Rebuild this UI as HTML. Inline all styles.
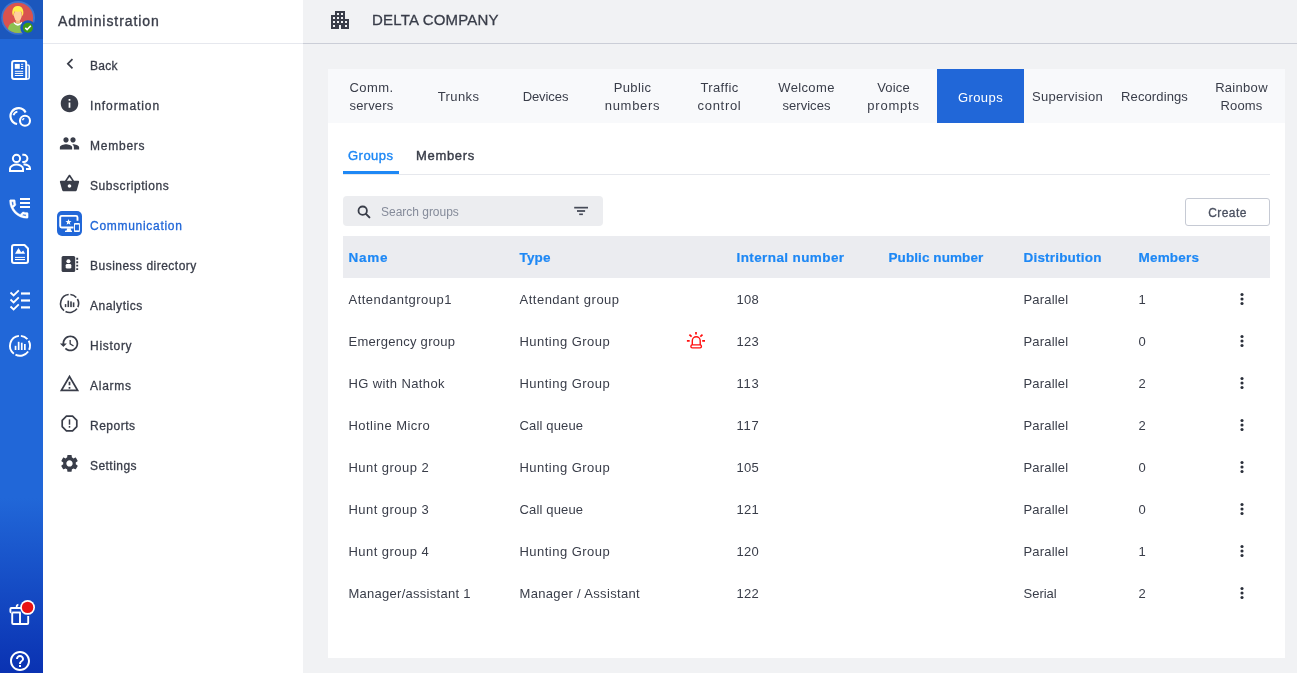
<!DOCTYPE html>
<html lang="en"><head><meta charset="utf-8"><title>Administration - Groups</title>
<style>
*{box-sizing:border-box}
html,body{margin:0;padding:0}
body{width:1297px;height:673px;overflow:hidden;position:relative;will-change:transform;background:#f1f2f4;font-family:"Liberation Sans",Arial,sans-serif;font-size:13px;color:#393d49}
ul{list-style:none;margin:0;padding:0}
.rail{position:absolute;left:0;top:0;width:43px;height:673px;background:linear-gradient(to bottom,#2167d8 0,#2167d8 74%,#0a32b2 100%)}
.rail .av{position:absolute;left:0;top:0;width:43px;height:39px;background:#1b57bd}
.railsvg{position:absolute;left:0;top:0}
.admin{position:absolute;left:43px;top:0;width:260px;height:673px;background:#fff}
.admin h1{margin:0;height:44px;border-bottom:1px solid #e6e8ee;font-size:14px;font-weight:400;line-height:43px;padding-left:15px;-webkit-text-stroke:.35px #393d49;color:#393d49}
.admin li{position:absolute;left:0;width:260px;height:40px;line-height:40px;font-size:12px;font-weight:400;-webkit-text-stroke:.3px currentColor}
.admin li .ml{position:absolute;left:47px;top:1px;white-space:nowrap}
.admin li.act{color:#2167d8}
.mi{position:absolute;overflow:visible}
.admin li .mi{margin-top:0}
.main{position:absolute;left:303px;top:0;width:994px;height:673px}
.main header{height:44px;border-bottom:1px solid #cbced7;position:relative}
.main header svg{position:absolute;left:25px;top:8px}
.main header h2{margin:0;position:absolute;left:69px;top:0;line-height:40px;font-size:15px;font-weight:400;-webkit-text-stroke:.3px #393d49;white-space:nowrap}
.card{position:absolute;left:25px;top:69px;width:957px;height:589px;background:#fff}
.tabs{display:flex;height:54px;background:#f8f9fb}
.tabs li{width:87px;height:54px;display:flex;align-items:center;justify-content:center;text-align:center;line-height:18px;padding-top:2px;white-space:nowrap}
.tabs li span span{display:inline-block}
.tabs li.on{background:#2167d8;color:#fff}
.tabs li.on>span{position:relative;top:1px}
.sub{position:absolute;left:15px;top:69px;width:927px;height:37px;border-bottom:1px solid #e6e8ed;font-weight:400;font-size:13px;-webkit-text-stroke:.4px currentColor}
.sub a{position:absolute;top:0;height:36px;line-height:36px;white-space:nowrap}
.sub a.on{left:0;width:56px;color:#1e88f5;border-bottom:3px solid #1e88f5;padding-left:5px}
.sub a.m{left:73px}
.search{position:absolute;left:15px;top:127px;width:260px;height:30px;border-radius:4px;background:#ecedf0;font-size:12px;color:#858b9a}
.search svg{position:absolute}
.search span.ph{position:absolute;left:38px;top:1px;line-height:31px;white-space:nowrap}
.btn{position:absolute;left:857px;top:129px;width:85px;height:28px;border:1px solid #c6cad4;border-radius:3px;background:#fff;font-size:12px;font-weight:400;-webkit-text-stroke:.3px #4a5060;color:#4a5060;text-align:center;line-height:27px;padding-top:1px}
table{position:absolute;left:15px;top:167px;width:927px;border-collapse:collapse;table-layout:fixed}
th{height:42px;background:#ebecf0;color:#1e88f5;font-weight:700;font-size:13.5px;-webkit-text-stroke:.2px #1e88f5;text-align:left;padding:1px 0 0 5.5px;white-space:nowrap}
td{height:42px;padding:1px 0 0 5.5px;white-space:nowrap;position:relative}
td.kb{padding:0;text-align:center}
.kebab{position:absolute;left:26px;top:14px}
.siren{position:absolute;left:172px;top:11.400px}
</style></head>
<body>
<nav class="rail"><div class="av"></div>
<svg class="railsvg" width="43" height="673" viewBox="0 0 43 673" fill="none" stroke="#fff" stroke-width="2" stroke-linejoin="round" stroke-linecap="butt">
<!-- avatar -->
<g stroke="none">
<circle cx="18.100" cy="17.800" r="16.900" fill="#3e74ce"/>
<circle cx="18" cy="17.800" r="15.100" fill="#d9534f"/>
<clipPath id="avc"><circle cx="18" cy="17.800" r="15.100"/></clipPath>
<g clip-path="url(#avc)">
<path d="M7.600 34 C7.600 26 9.500 23.200 13.500 22.800 L22.500 22.800 C26.500 23.200 28.400 26 28.400 34 Z" fill="#8cc152"/>
<path d="M13.700 21.700 Q17.850 26 22 21.700 L22 23.300 Q17.850 28 13.700 23.300 Z" fill="#fff"/>
<path d="M15.700 18.500 h4.300 v3.900 Q17.850 24.600 15.700 22.400 Z" fill="#f4b87a"/>
<ellipse cx="17.850" cy="15.300" rx="3.950" ry="5.600" fill="#ffcf9e"/>
<path d="M13.600 15.900 C12.600 15.500 12 13.500 12.300 11.200 C12.700 7.600 14.800 5.900 17.800 5.900 S22.900 7.600 23.300 11.200 C23.600 13.500 23 15.500 22.100 15.900 C22 13.700 21.700 12.400 20.900 11.300 C19 12 16 11.900 14.900 11.300 C14 12.400 13.700 13.700 13.600 15.900 Z" fill="#fff04e"/>
</g>
<circle cx="27.900" cy="27.800" r="7.600" fill="#1b57bd"/>
<circle cx="27.900" cy="27.800" r="5" fill="#3f9a12"/>
<path d="M25.300 27.900 l1.800 1.700 l3.700 -3.900" stroke="#fff" stroke-width="1.600" fill="none" stroke-linejoin="miter"/>
</g>
<!-- news -->
<path d="M12.100 63 a2 2 0 0 1 2 -2 h10.100 a2 2 0 0 1 2 2 v16 h-12.100 a2 2 0 0 1 -2 -2 z"/>
<path d="M27.200 64.900 h.5 a1.500 1.500 0 0 1 1.500 1.500 v11.100 a1.500 1.500 0 0 1 -1.500 1.500 h-2" stroke-width="1.500"/>
<g stroke="none" fill="#fff"><rect x="14.800" y="63.900" width="5" height="4.900"/><rect x="21" y="63.800" width="2.200" height="1"/><rect x="21" y="65.900" width="2.200" height="1"/><rect x="21" y="68" width="2.200" height="1"/><rect x="14.800" y="70.800" width="8.400" height="1"/><rect x="14.800" y="72.900" width="8.400" height="1"/><rect x="14.800" y="75" width="8.400" height="1"/></g>
<!-- bubbles -->
<g stroke-width="2.200">
<path d="M25.600 112.400 A8 8 0 1 0 17.100 124"/>
<path d="M13.500 115.200 A5 5 0 0 1 17.400 111.600" stroke-width="1.900"/>
<circle cx="25" cy="120.800" r="5" stroke-width="2.100"/>
<path d="M22.500 120.200 A2.800 2.800 0 0 1 24.300 118.400" stroke-width="1.500"/>
</g>
<!-- people outline -->
<g stroke-width="2">
<circle cx="16.500" cy="158.400" r="3.600"/>
<path d="M10 171 v-2.600 c0 -2.400 4 -3.900 6.500 -3.900 s6.500 1.500 6.500 3.900 v2.600 z" stroke-linejoin="miter"/>
<path d="M22.300 154.800 h1.500 a3.600 3.600 0 0 1 0 7.200 h-1.500" />
<path d="M23.500 164.200 c3 .3 6.500 1.700 6.500 4.100 v.700 h-4" stroke-linejoin="miter"/>
</g>
<!-- phone + list -->
<g transform="translate(6.500,196.600) scale(1.030)" stroke="#fff" stroke-width=".350" fill="#fff"><path d="M6.54 5c.06.89.21 1.76.45 2.590l-1.200 1.200c-.41-1.200-.67-2.470-.76-3.790h1.510m9.860 12.020c.85.24 1.720.39 2.600.45v1.490c-1.320-.09-2.590-.35-3.800-.75l1.200-1.190M7.500 3H4c-.55 0-1 .45-1 1 0 9.390 7.610 17 17 17 .55 0 1-.45 1-1v-3.490c0-.55-.45-1-1-1-1.240 0-2.450-.2-3.570-.57-.1-.04-.21-.05-.31-.05-.26 0-.51.1-.71.290l-2.200 2.200c-2.830-1.450-5.150-3.760-6.590-6.590l2.200-2.200c.28-.28.36-.67.25-1.020C8.700 6.450 8.500 5.250 8.500 4c0-.55-.45-1-1-1z"/></g>
<g stroke="none" fill="#fff"><rect x="20" y="198" width="10" height="2"/><rect x="20" y="202" width="10" height="2"/><rect x="20" y="206" width="10" height="2"/></g>
<!-- doc image -->
<path d="M12 247 a2 2 0 0 1 2 -2 h10.500 l3.500 3.500 v12.500 a2 2 0 0 1 -2 2 h-12 a2 2 0 0 1 -2 -2 z"/>
<g stroke="none" fill="#fff"><path d="M15 253.800 l3.500 -5.700 l2.700 4.200 l2 -1.700 l1.900 3.200 z"/><rect x="15" y="256.900" width="10" height="1"/><rect x="15" y="259" width="10" height="1.100"/></g>
<!-- checklist -->
<g stroke-width="1.800" stroke-linejoin="miter"><path d="M10.500 292.500 l3.100 3 l5.200 -5.200"/><path d="M10.500 299.500 l3.100 3 l5.200 -5.200"/><path d="M10.500 306.500 l3.100 3 l5.200 -5.200"/></g>
<g stroke="none" fill="#fff"><rect x="21" y="292.400" width="9" height="2.200"/><rect x="21" y="299.400" width="9" height="2.200"/><rect x="21" y="306.300" width="9" height="2.200"/></g>
<!-- analytics -->
<g stroke-width="1.900">
<path d="M20.87 335.84A10 10 0 0 1 27.43 339.11M28.66 340.80A10 10 0 0 1 29.14 349.87M28.19 351.54A10 10 0 0 1 15.46 354.71M13.84 353.68A10 10 0 0 1 18.95 335.85"/>
</g>
<g stroke="none" fill="#fff"><rect x="14.700" y="345.800" width="1.700" height="4.200"/><rect x="17.800" y="341.800" width="1.700" height="8.200"/><rect x="20.900" y="342.700" width="1.700" height="7.300"/><rect x="24" y="344" width="1.700" height="6"/></g>
<!-- gift -->
<g stroke-width="1.900">
<path d="M11.400 612.500 a1 1 0 0 1 -1 -1 v-2.500 a1 1 0 0 1 1 -1 h9.600"/>
<path d="M12.200 612.500 v10.500 a1 1 0 0 0 1 1 h14 a1 1 0 0 0 1 -1 v-7"/>
<path d="M20 612.500 v11.500"/>
<path d="M12.200 612.500 h8.500"/>
<path d="M17.500 608 c-1.500 -1.300 -1 -3.100 .9 -3.400" stroke-width="1.800"/>
</g>
<circle cx="27.600" cy="607.400" r="7.400" fill="#fff" stroke="none"/>
<circle cx="27.600" cy="607.400" r="5.700" fill="#e81212" stroke="none"/>
<!-- help -->
<g transform="translate(8,649)" stroke="none" fill="#fff"><path d="M11 18h2v-2h-2v2zm1-16C6.48 2 2 6.48 2 12s4.48 10 10 10 10-4.48 10-10S17.52 2 12 2zm0 18c-4.41 0-8-3.590-8-8s3.590-8 8-8 8 3.590 8 8-3.590 8-8 8zm0-14c-2.210 0-4 1.790-4 4h2c0-1.100.9-2 2-2s2 .9 2 2c0 2-3 1.750-3 5h2c0-2.250 3-2.500 3-5 0-2.210-1.790-4-4-4z"/></g>
</svg>
</nav>
<aside class="admin">
<h1><span style="letter-spacing:0.933px">Administration</span></h1>
<ul>
<li style="top:45px"><svg class="mi" style="left:16px;top:8px" width="21.00" height="21.00" viewBox="0 0 24 24"><path transform="translate(0.69 0.23)" fill="#393d49" d="M15.41 7.410L14 6l-6 6 6 6 1.410-1.410L10.830 12z"/></svg><span class="ml"><span style="letter-spacing:0.309px">Back</span></span></li>
<li style="top:85px"><svg class="mi" style="left:16px;top:7px" width="21.00" height="21.00" viewBox="0 0 24 24"><path transform="translate(0.00 1.03)" fill="#393d49" d="M12 2C6.48 2 2 6.48 2 12s4.48 10 10 10 10-4.48 10-10S17.52 2 12 2zm1 15h-2v-6h2v6zm0-8h-2V7h2v2z"/></svg><span class="ml"><span style="letter-spacing:0.908px">Information</span></span></li>
<li style="top:125px"><svg class="mi" style="left:16px;top:7px" width="21.00" height="21.00" viewBox="0 0 24 24"><path transform="translate(0.00 1.03)" fill="#393d49" d="M16 11c1.66 0 2.99-1.34 2.99-3S17.66 5 16 5c-1.66 0-3 1.34-3 3s1.34 3 3 3zm-8 0c1.66 0 2.99-1.34 2.99-3S9.66 5 8 5C6.34 5 5 6.34 5 8s1.34 3 3 3zm0 2c-2.33 0-7 1.17-7 3.5V19h14v-2.5c0-2.33-4.67-3.5-7-3.5zm8 0c-.29 0-.62.02-.97.05 1.16.84 1.97 1.97 1.97 3.45V19h6v-2.5c0-2.33-4.67-3.5-7-3.5z"/></svg><span class="ml"><span style="letter-spacing:0.764px">Members</span></span></li>
<li style="top:165px"><svg class="mi" style="left:16px;top:7px" width="21.00" height="21.00" viewBox="0 0 24 24"><path transform="translate(0.00 1.03)" fill="#393d49" d="M17.21 9l-4.38-6.56c-.19-.28-.51-.42-.83-.42-.32 0-.64.14-.83.43L6.79 9H2c-.55 0-1 .45-1 1 0 .09.01.18.04.27l2.54 9.27c.23.84 1 1.46 1.92 1.46h13c.92 0 1.69-.62 1.93-1.46l2.54-9.27L23 10c0-.55-.45-1-1-1h-4.790zM9 9l3-4.4L15 9H9zm3 8c-1.100 0-2-.9-2-2s.9-2 2-2 2 .9 2 2-.9 2-2 2z"/></svg><span class="ml"><span style="letter-spacing:0.556px">Subscriptions</span></span></li>
<li class="act" style="top:205px"><svg class="mi" style="left:14px;top:6px" width="25" height="25" viewBox="0 0 25 25"><rect width="25" height="25" rx="5" fill="#2167d8"/>
<path d="M20.500 9.800 V6.400 a1.500 1.500 0 0 0 -1.500 -1.500 H4.700 a1.500 1.500 0 0 0 -1.500 1.500 V14.950 a1.500 1.500 0 0 0 1.500 1.500 H16.500" fill="none" stroke="#fff" stroke-width="1.900"/>
<polygon points="9.850,17.300 13.900,17.300 13.900,19.200 15,19.800 15,21 8,21 8,19.800 9.850,19.200" fill="#fff"/>
<polygon points="11.50,8.00 12.29,10.11 14.54,10.21 12.78,11.62 13.38,13.79 11.50,12.55 9.62,13.79 10.22,11.62 8.46,10.21 10.71,10.11" fill="#fff"/>
<rect x="17" y="12.100" width="5.900" height="8.900" rx=".800" fill="#fff"/><rect x="17.950" y="13.650" width="4" height="5.700" fill="#2167d8"/></svg><span class="ml"><span style="letter-spacing:0.71px">Communication</span></span></li>
<li style="top:245px"><svg class="mi" style="left:16px;top:8px" width="22" height="22" viewBox="0 0 22 22"><rect x="2.600" y="2.900" width="13.600" height="16" rx="1.500" fill="#393d49"/>
<path d="M18.200 4.800 v13.500" stroke="#393d49" stroke-width="1.900" stroke-dasharray="1.900 1.550" fill="none"/>
<circle cx="9.450" cy="8.300" r="2.050" fill="#fff"/><rect x="6.700" y="10.900" width="5.600" height="4.700" rx="1.400" fill="#fff"/></svg><span class="ml"><span style="letter-spacing:0.486px">Business directory</span></span></li>
<li style="top:285px"><svg class="mi" style="left:15px;top:7px" width="24" height="24" viewBox=".4 .5 24 24"><path d="M12.78 3.03A9 9 0 0 1 18.69 5.98M19.79 7.50A9 9 0 0 1 20.22 15.66M19.37 17.16A9 9 0 0 1 7.91 20.02M6.46 19.09A9 9 0 0 1 11.06 3.05" fill="none" stroke="#393d49" stroke-width="1.600"/>
<g fill="#393d49"><rect x="7.200" y="12.600" width="1.500" height="3"/><rect x="9.900" y="9.100" width="1.600" height="6.500"/><rect x="12.600" y="9.900" width="1.600" height="5.700"/><rect x="15.200" y="10.900" width="1.600" height="4.700"/></g></svg><span class="ml"><span style="letter-spacing:0.523px">Analytics</span></span></li>
<li style="top:325px"><svg class="mi" style="left:16px;top:7px" width="21.00" height="21.00" viewBox="0 0 24 24"><path transform="translate(0.00 1.03)" fill="#393d49" d="M13 3c-4.97 0-9 4.03-9 9H1l3.890 3.890.07.14L9 12H6c0-3.870 3.130-7 7-7s7 3.130 7 7-3.130 7-7 7c-1.930 0-3.680-.79-4.940-2.060l-1.420 1.420C8.270 19.990 10.510 21 13 21c4.970 0 9-4.030 9-9s-4.030-9-9-9zm-1 5v5l4.280 2.540.72-1.210-3.500-2.080V8H12z"/></svg><span class="ml"><span style="letter-spacing:0.709px">History</span></span></li>
<li style="top:365px"><svg class="mi" style="left:16px;top:7px" width="21.00" height="21.00" viewBox="0 0 24 24"><path transform="translate(0.00 1.03)" fill="#393d49" d="M12 5.99L19.53 19H4.47L12 5.990M12 2L1 21h22L12 2zm1 14h-2v2h2v-2zm0-6h-2v4h2v-4z"/></svg><span class="ml"><span style="letter-spacing:0.731px">Alarms</span></span></li>
<li style="top:405px"><svg class="mi" style="left:15px;top:7px" width="24" height="24" viewBox=".5 .5 24 24"><path d="M8.950 4.700 h6.100 l4.250 4.250 v6.100 l-4.250 4.250 h-6.100 l-4.250 -4.250 v-6.100 z" fill="none" stroke="#393d49" stroke-width="1.700" stroke-linejoin="round"/>
<rect x="11.250" y="7.900" width="1.500" height="5.300" fill="#393d49"/><rect x="11.250" y="14.500" width="1.500" height="1.700" fill="#393d49"/></svg><span class="ml"><span style="letter-spacing:0.497px">Reports</span></span></li>
<li style="top:445px"><svg class="mi" style="left:16px;top:7px" width="21.00" height="21.00" viewBox="0 0 24 24"><path transform="translate(0.00 1.03)" fill="#393d49" d="M19.14 12.94c.04-.3.06-.61.06-.94 0-.32-.02-.64-.07-.94l2.030-1.580c.18-.14.23-.41.12-.61l-1.920-3.320c-.12-.22-.37-.29-.59-.22l-2.390.96c-.5-.38-1.030-.7-1.620-.94l-.36-2.540c-.04-.24-.24-.41-.48-.41h-3.840c-.24 0-.43.17-.47.41l-.36 2.540c-.59.24-1.130.57-1.620.94l-2.390-.96c-.22-.08-.47 0-.59.22L2.740 8.870c-.12.21-.08.47.12.610l2.030 1.580c-.05.3-.09.63-.09.94s.02.64.07.94l-2.030 1.580c-.18.14-.23.41-.12.61l1.920 3.320c.12.22.37.29.59.22l2.390-.96c.5.38 1.030.7 1.620.94l.36 2.540c.05.24.24.41.48.41h3.840c.24 0 .44-.17.470-.41l.36-2.540c.59-.24 1.130-.56 1.620-.94l2.390.96c.22.08.47 0 .59-.22l1.920-3.320c.12-.22.07-.47-.12-.61l-2.010-1.580zM12 15.600c-1.980 0-3.600-1.620-3.600-3.600s1.620-3.600 3.600-3.600 3.600 1.620 3.600 3.600-1.620 3.600-3.600 3.600z"/></svg><span class="ml"><span style="letter-spacing:0.451px">Settings</span></span></li>
</ul>
</aside>
<section class="main">
<header><svg width="24" height="24" viewBox="0 0 24 24"><path fill="#393d49" d="M17 11V3H7v4H3v14h8v-4h2v4h8V11h-4zM7 19H5v-2h2v2zm0-4H5v-2h2v2zm0-4H5V9h2v2zm4 4H9v-2h2v2zm0-4H9V9h2v2zm0-4H9V5h2v2zm4 8h-2v-2h2v2zm0-4h-2V9h2v2zm0-4h-2V5h2v2zm4 12h-2v-2h2v2zm0-4h-2v-2h2v2z"/></svg><h2><span style="letter-spacing:0.202px">DELTA COMPANY</span></h2></header>
<div class="card">
<ul class="tabs"><li><span><span style="letter-spacing:0.402px">Comm.</span><br><span style="letter-spacing:0.196px">servers</span></span></li><li><span><span style="letter-spacing:0.41px">Trunks</span></span></li><li><span><span style="letter-spacing:-0.075px">Devices</span></span></li><li><span><span style="letter-spacing:0.376px">Public</span><br><span style="letter-spacing:0.718px">numbers</span></span></li><li><span><span style="letter-spacing:0.402px">Traffic</span><br><span style="letter-spacing:0.695px">control</span></span></li><li><span><span style="letter-spacing:0.374px">Welcome</span><br><span style="letter-spacing:0.016px">services</span></span></li><li><span><span style="letter-spacing:0.147px">Voice</span><br><span style="letter-spacing:0.772px">prompts</span></span></li><li class=on><span><span style="letter-spacing:0.412px">Groups</span></span></li><li><span><span style="letter-spacing:0.275px">Supervision</span></span></li><li><span><span style="letter-spacing:0.113px">Recordings</span></span></li><li><span><span style="letter-spacing:0.298px">Rainbow</span><br><span style="letter-spacing:0.178px">Rooms</span></span></li></ul>
<div class="sub"><a class="on"><span style="letter-spacing:0.472px">Groups</span></a><a class="m"><span style="letter-spacing:0.685px">Members</span></a></div>
<div class="search"><svg style="left:14px;top:9px" width="15" height="14" viewBox="0 0 15 14"><circle cx="5.700" cy="5.700" r="4.200" fill="none" stroke="#393d49" stroke-width="1.800"/><path d="M8.900 8.900 l3.500 3.500" stroke="#393d49" stroke-width="2" stroke-linecap="round"/></svg><span class="ph"><span style="letter-spacing:-0.019px">Search groups</span></span><svg style="left:228px;top:6px" width="18" height="18" viewBox="0 0 18 18"><g fill="#464b58"><rect x="3.200" y="4.800" width="13.800" height="1.700"/><rect x="6" y="8.100" width="8.100" height="1.800"/><rect x="8.200" y="11.500" width="3.700" height="1.600"/></g></svg></div>
<div class="btn"><span style="letter-spacing:0.437px">Create</span></div>
<table><thead><tr><th style="width:171px"><span style="letter-spacing:0.706px">Name</span></th><th style="width:217px"><span style="letter-spacing:0.156px">Type</span></th><th style="width:152px"><span style="letter-spacing:0.397px">Internal number</span></th><th style="width:135px"><span style="letter-spacing:0.085px">Public number</span></th><th style="width:115px"><span style="letter-spacing:0.194px">Distribution</span></th><th style="width:81px"><span style="letter-spacing:0.201px">Members</span></th><th style="width:56px"></th></tr></thead>
<tbody>
<tr><td><span style="letter-spacing:0.488px">Attendantgroup1</span></td><td><span style="letter-spacing:0.504px">Attendant group</span></td><td><span style="letter-spacing:0.248px">108</span></td><td></td><td><span style="letter-spacing:0.175px">Parallel</span></td><td>1</td><td class="kb"><svg class="kebab" width="4" height="14" viewBox="0 0 4 14"><g fill="#2b303b"><circle cx="2" cy="2.500" r="1.550"/><circle cx="2" cy="7" r="1.550"/><circle cx="2" cy="11.500" r="1.550"/></g></svg></td></tr>
<tr><td><span style="letter-spacing:0.276px">Emergency group</span></td><td><span style="letter-spacing:0.468px">Hunting Group</span><svg class="siren" width="20" height="18" viewBox="0 0 20 18" fill="none" stroke="#ff1010" stroke-width="1.400"><path d="M6.300 13.900 v-4.200 a3.950 3.950 0 0 1 7.900 0 v4.200"/><rect x="4.900" y="13.900" width="10.500" height="3" rx="1.300"/><path d="M10 .9 v2.700 M3.400 3.600 l2.200 2.100 M16.500 3.600 l-2.200 2.100 M.9 9.900 h2.800 M16.200 9.900 h2.800" stroke-width="1.700"/></svg></td><td><span style="letter-spacing:0.248px">123</span></td><td></td><td><span style="letter-spacing:0.175px">Parallel</span></td><td>0</td><td class="kb"><svg class="kebab" width="4" height="14" viewBox="0 0 4 14"><g fill="#2b303b"><circle cx="2" cy="2.500" r="1.550"/><circle cx="2" cy="7" r="1.550"/><circle cx="2" cy="11.500" r="1.550"/></g></svg></td></tr>
<tr><td><span style="letter-spacing:0.389px">HG with Nathok</span></td><td><span style="letter-spacing:0.468px">Hunting Group</span></td><td><span style="letter-spacing:0.733px">113</span></td><td></td><td><span style="letter-spacing:0.175px">Parallel</span></td><td>2</td><td class="kb"><svg class="kebab" width="4" height="14" viewBox="0 0 4 14"><g fill="#2b303b"><circle cx="2" cy="2.500" r="1.550"/><circle cx="2" cy="7" r="1.550"/><circle cx="2" cy="11.500" r="1.550"/></g></svg></td></tr>
<tr><td><span style="letter-spacing:0.452px">Hotline Micro</span></td><td><span style="letter-spacing:0.157px">Call queue</span></td><td><span style="letter-spacing:0.733px">117</span></td><td></td><td><span style="letter-spacing:0.175px">Parallel</span></td><td>2</td><td class="kb"><svg class="kebab" width="4" height="14" viewBox="0 0 4 14"><g fill="#2b303b"><circle cx="2" cy="2.500" r="1.550"/><circle cx="2" cy="7" r="1.550"/><circle cx="2" cy="11.500" r="1.550"/></g></svg></td></tr>
<tr><td><span style="letter-spacing:0.456px">Hunt group 2</span></td><td><span style="letter-spacing:0.468px">Hunting Group</span></td><td><span style="letter-spacing:0.248px">105</span></td><td></td><td><span style="letter-spacing:0.175px">Parallel</span></td><td>0</td><td class="kb"><svg class="kebab" width="4" height="14" viewBox="0 0 4 14"><g fill="#2b303b"><circle cx="2" cy="2.500" r="1.550"/><circle cx="2" cy="7" r="1.550"/><circle cx="2" cy="11.500" r="1.550"/></g></svg></td></tr>
<tr><td><span style="letter-spacing:0.456px">Hunt group 3</span></td><td><span style="letter-spacing:0.157px">Call queue</span></td><td><span style="letter-spacing:0.248px">121</span></td><td></td><td><span style="letter-spacing:0.175px">Parallel</span></td><td>0</td><td class="kb"><svg class="kebab" width="4" height="14" viewBox="0 0 4 14"><g fill="#2b303b"><circle cx="2" cy="2.500" r="1.550"/><circle cx="2" cy="7" r="1.550"/><circle cx="2" cy="11.500" r="1.550"/></g></svg></td></tr>
<tr><td><span style="letter-spacing:0.456px">Hunt group 4</span></td><td><span style="letter-spacing:0.468px">Hunting Group</span></td><td><span style="letter-spacing:0.248px">120</span></td><td></td><td><span style="letter-spacing:0.175px">Parallel</span></td><td>1</td><td class="kb"><svg class="kebab" width="4" height="14" viewBox="0 0 4 14"><g fill="#2b303b"><circle cx="2" cy="2.500" r="1.550"/><circle cx="2" cy="7" r="1.550"/><circle cx="2" cy="11.500" r="1.550"/></g></svg></td></tr>
<tr><td><span style="letter-spacing:0.267px">Manager/assistant 1</span></td><td><span style="letter-spacing:0.334px">Manager / Assistant</span></td><td><span style="letter-spacing:0.248px">122</span></td><td></td><td><span style="letter-spacing:-0.01px">Serial</span></td><td>2</td><td class="kb"><svg class="kebab" width="4" height="14" viewBox="0 0 4 14"><g fill="#2b303b"><circle cx="2" cy="2.500" r="1.550"/><circle cx="2" cy="7" r="1.550"/><circle cx="2" cy="11.500" r="1.550"/></g></svg></td></tr>
</tbody></table>
</div>
</section>
</body></html>
